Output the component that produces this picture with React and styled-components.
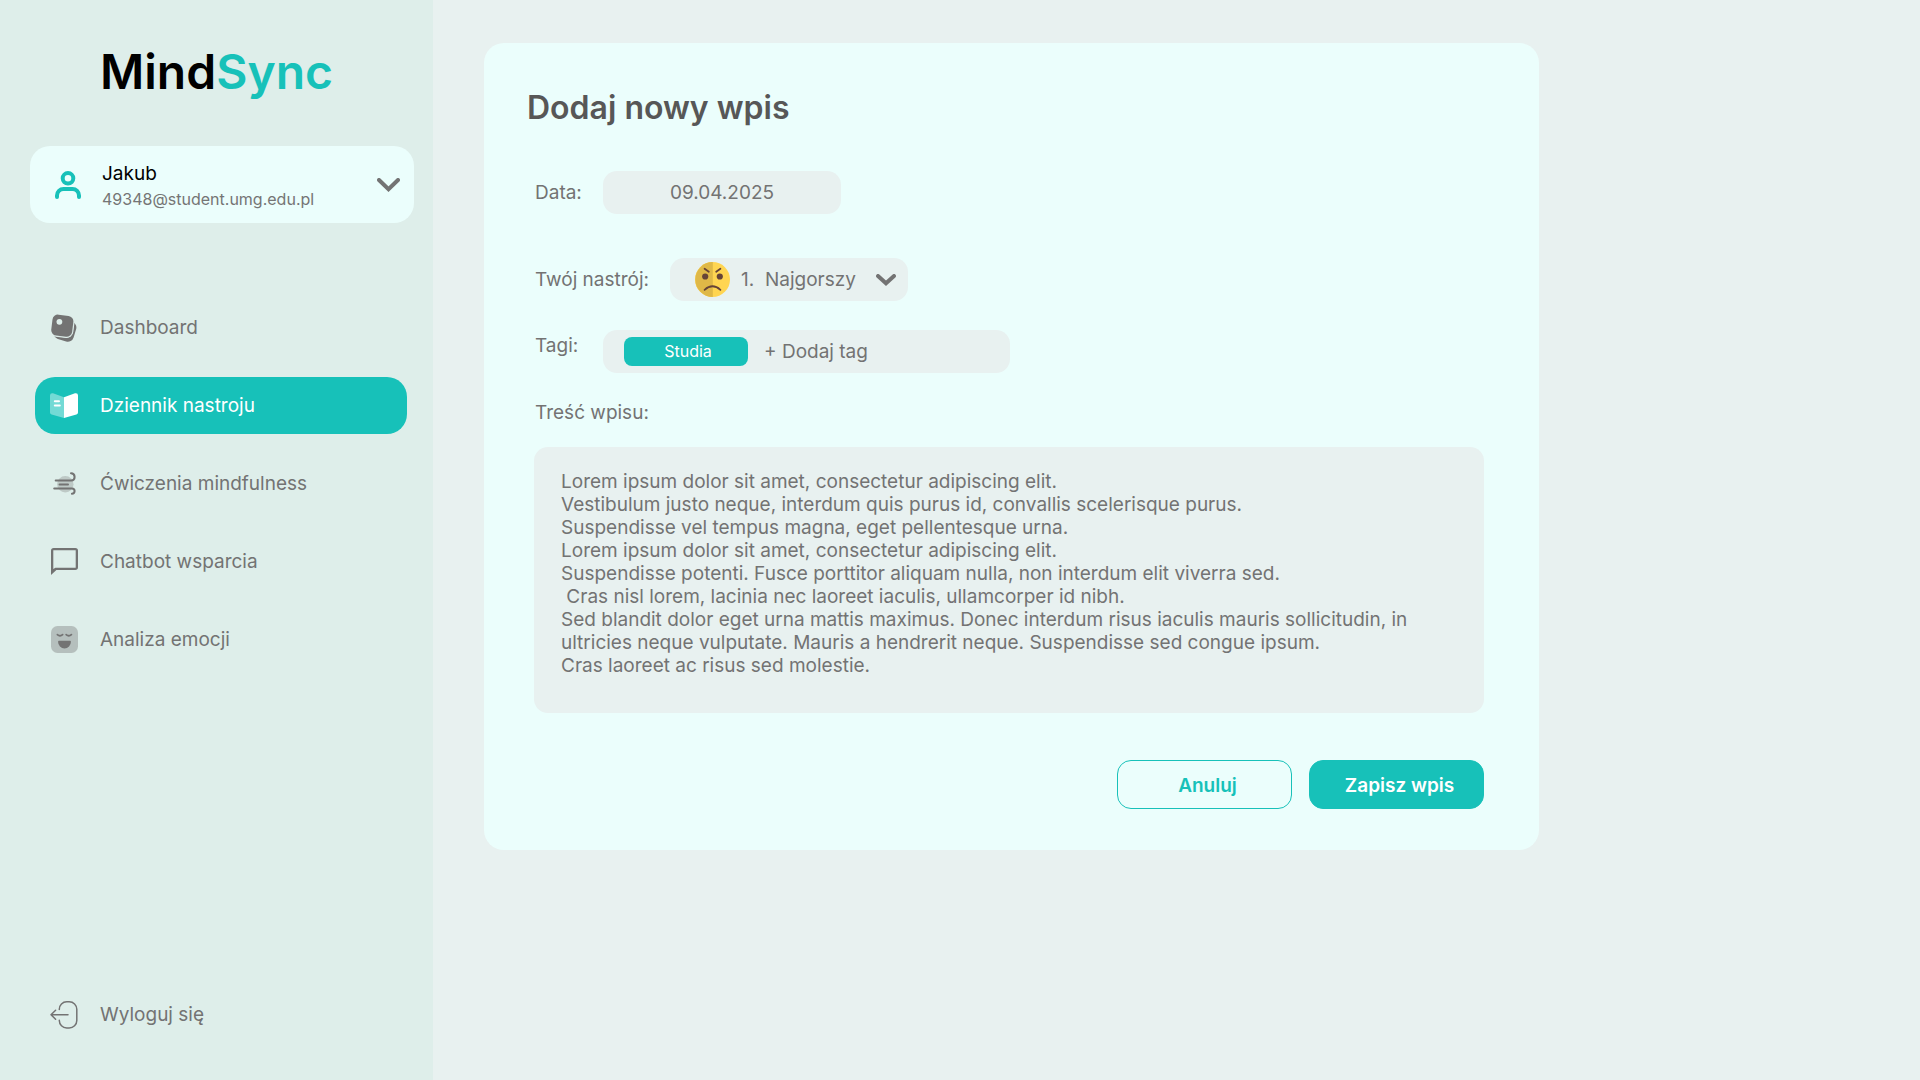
import React, { useState } from "react";
import styled, { createGlobalStyle } from "styled-components";

const teal = "#17c1b9";
const grey = "#737373";
const sidebarBg = "#deeeea";
const pageBg = "#e8f1f0";
const surface = "#ebfefc";

const GlobalStyle = createGlobalStyle`
  *, *::before, *::after { box-sizing: border-box; }
  body {
    margin: 0;
    background: ${pageBg};
    color: ${grey};
    font-family: Inter, "Liberation Sans", sans-serif;
    font-size: 19px;
    line-height: 23px;
  }
  button, input, select, textarea { font: inherit; color: inherit; }
  button { cursor: pointer; }
`;

const Layout = styled.div`
  display: flex;
  min-height: 100vh;
`;

const Sidebar = styled.aside`
  display: flex;
  flex-direction: column;
  flex: 0 0 433px;
  padding: 43px 0 37px;
  background: ${sidebarBg};
`;

const Logo = styled.div`
  color: #000;
  font-size: 48px;
  font-weight: 600;
  line-height: 58px;
  text-align: center;

  span { color: ${teal}; }
`;

const UserButton = styled.button`
  display: flex;
  align-items: center;
  gap: 21px;
  margin: 45px 19px 76px 30px;
  padding: 15px 14px 14px 25px;
  border: 0;
  border-radius: 20px;
  background: ${surface};
  text-align: left;
`;

const UserText = styled.span`
  display: flex;
  flex: 1;
  flex-direction: column;
  gap: 2px;
`;

const UserName = styled.span`
  color: #000;
  line-height: 26px;
`;

const UserMail = styled.span`
  color: #757575;
  font-size: 16px;
  line-height: 20px;
`;

const Nav = styled.nav`
  display: flex;
  flex: 1;
  flex-direction: column;
  gap: 21px;
  padding: 0 26px 0 35px;
`;

const NavLink = styled.a`
  display: flex;
  align-items: center;
  gap: 21px;
  height: 57px;
  padding: 0 14px;
  border-radius: 20px;
  background: ${({ $active }) => ($active ? teal : "transparent")};
  color: ${({ $active }) => ($active ? "#fff" : grey)};
  text-decoration: none;
  margin-top: ${({ $last }) => ($last ? "auto" : "0")};
`;

const IconSlot = styled.span`
  display: flex;
  flex: 0 0 30px;
  justify-content: center;
`;

const Main = styled.main`
  flex: 1;
  padding: 43px 51px;
`;

const Card = styled.form`
  display: flex;
  flex-direction: column;
  max-width: 1055px;
  padding: 45px 55px 41px 50px;
  border-radius: 20px;
  background: ${surface};
`;

const Title = styled.h1`
  margin: 0 -7px 44px;
  color: #575757;
  font-size: 32px;
  font-weight: 600;
  line-height: 39px;
`;

const Row = styled.div`
  display: flex;
  align-items: flex-start;
  margin-bottom: ${({ $gap }) => $gap}px;
`;

const Label = styled.label`
  min-width: 69px;
  padding: 0 21px 0 1px;
  line-height: ${({ $raised }) => ($raised ? 31 : 43)}px;
`;

const BlockLabel = styled.label`
  margin-bottom: 23px;
  padding-left: 1px;
`;

const DateInput = styled.input`
  width: 238px;
  height: 43px;
  padding: 0 14px;
  border: 0;
  border-radius: 14px;
  background: ${pageBg};
  text-align: center;
`;

const MoodField = styled.div`
  display: flex;
  align-items: center;
  width: 238px;
  height: 43px;
  padding: 0 12px 0 25px;
  border-radius: 14px;
  background: ${pageBg};
`;

const MoodSelect = styled.select`
  flex: 1;
  min-width: 0;
  height: 43px;
  padding: 0 0 0 11px;
  border: 0;
  background: transparent;
  appearance: none;
`;

const TagField = styled.div`
  display: flex;
  align-items: center;
  gap: 16px;
  width: 407px;
  height: 43px;
  padding: 0 21px;
  border-radius: 14px;
  background: ${pageBg};
`;

const Tag = styled.span`
  width: 124px;
  border-radius: 8px;
  padding: 0 0 0 4px;
  background: ${teal};
  color: #fff;
  font-size: 16px;
  line-height: 29px;
  text-align: center;
`;

const AddTag = styled.button`
  padding: 0;
  border: 0;
  background: none;
`;

const Entry = styled.textarea`
  display: block;
  width: 100%;
  height: 266px;
  margin-bottom: 47px;
  padding: 23px 40px 22px 27px;
  border: 0;
  border-radius: 14px;
  background: ${pageBg};
  line-height: 23px;
  resize: none;
`;

const Actions = styled.div`
  display: flex;
  justify-content: flex-end;
  gap: 17px;
`;

const ActionButton = styled.button`
  width: 175px;
  height: 49px;
  padding: 1px 0 0 6px;
  border: 1px solid ${teal};
  border-radius: 14px;
  background: ${({ $primary }) => ($primary ? teal : "transparent")};
  color: ${({ $primary }) => ($primary ? "#fff" : teal)};
  font-weight: 600;
`;

const UserIcon = () => (
  <svg width="26" height="28" viewBox="0 0 26 28" fill="none" stroke={teal} strokeWidth="4" strokeLinecap="round" aria-hidden="true">
    <circle cx="13" cy="7.3" r="5.3" />
    <path d="M2 26v-1.5a6.5 6.5 0 0 1 6.5-6.5h9a6.5 6.5 0 0 1 6.5 6.5V26" />
  </svg>
);

const Chevron = ({ width, height }) => (
  <svg width={width} height={height} viewBox={`0 0 ${width} ${height}`} fill="none" stroke={grey} strokeWidth="4" strokeLinecap="round" aria-hidden="true">
    <path d={`M2 2L${width / 2} ${height - 2.8}L${width - 2} 2`} />
  </svg>
);

const DashboardIcon = () => (
  <svg width="26" height="28" viewBox="0 0 26 28" fill={grey} aria-hidden="true">
    <rect x="3.7" y="6" width="20.6" height="20.6" rx="6" transform="rotate(17 14 16.3)" />
    <rect x="0.1" y="0.5" width="22.4" height="22.4" rx="6.2" transform="rotate(7 11.3 11.7)" fill={sidebarBg} stroke={sidebarBg} strokeWidth="1" />
    <rect x="0.8" y="1.2" width="21" height="21" rx="5.5" transform="rotate(7 11.3 11.7)" />
    <circle cx="8.4" cy="7.8" r="2.9" fill={sidebarBg} />
  </svg>
);

const BookIcon = () => (
  <svg width="28" height="25" viewBox="0 0 28 25" aria-hidden="true">
    <path d="M14 4.2L3 .3Q0-.3 0 2.6V19.5Q0 21 1.6 21.4L14 25z" fill="#fff" opacity=".4" />
    <path d="M14 4.2L25 .3Q28-.3 28 2.6V19.5Q28 21 26.4 21.4L14 25z" fill="#fff" />
    <path d="M4.8 8.2h4.2M4.8 12.4h5" stroke="#fff" strokeWidth="2" strokeLinecap="round" />
  </svg>
);

const WindIcon = () => (
  <svg width="23" height="23" viewBox="0 0 23 23" fill="none" stroke={grey} strokeWidth="2" strokeLinecap="round" aria-hidden="true">
    <circle cx="12.3" cy="12.2" r="8.2" fill={grey} opacity=".3" stroke="none" />
    <path d="M2.7 8.5H18.2A3.6 3.6 0 0 0 21.6 4.9A3.7 3.7 0 0 0 18 1.3" />
    <path d="M6.5 12.5H15" />
    <path d="M1.2 16.5H19A2.6 2.6 0 0 1 21.6 19.1A2.7 2.7 0 0 1 18.9 21.8" />
  </svg>
);

const ChatIcon = () => (
  <svg width="27" height="27" viewBox="0 0 27 27" aria-hidden="true">
    <path fill={grey} fillRule="evenodd" d="M2.7 0H24.3A2.7 2.7 0 0 1 27 2.7V19.3A2.7 2.7 0 0 1 24.3 22H5.4L0 27V2.7A2.7 2.7 0 0 1 2.7 0ZM2.3 2.3V21L4.4 19.7H24.7V2.3Z" />
  </svg>
);

const EmotionIcon = () => (
  <svg width="27" height="27" viewBox="0 0 27 27" aria-hidden="true">
    <rect width="27" height="27" rx="6.5" fill={grey} opacity=".38" />
    <path d="M6.4 8.6Q9 11 11.6 8.6M15.2 8.6Q17.8 11 20.4 8.6" fill="none" stroke={grey} strokeWidth="1.8" strokeLinecap="round" />
    <path d="M8 14.8H19Q20 14.8 19.9 16A6.4 6.4 0 0 1 7.1 16Q7 14.8 8 14.8Z" fill={grey} />
  </svg>
);

const LogoutIcon = () => (
  <svg width="28" height="28" viewBox="0 0 28 28" fill="none" stroke={grey} strokeWidth="1.5" strokeLinecap="round" strokeLinejoin="round" aria-hidden="true">
    <path d="M9.3 8.6V8.2A7.4 7.4 0 0 1 16.7.8H19A7.6 7.6 0 0 1 26.8 8.6V19.2A7.6 7.6 0 0 1 19 27H16.7A7.4 7.4 0 0 1 9.3 19.6V19.2" />
    <path d="M18 13.7H1M5.6 9.2L1 13.7L5.6 18.2" />
  </svg>
);

const AngryFace = () => (
  <svg width="35" height="35" viewBox="0 0 35 35" fill="none" aria-hidden="true">
    <circle cx="17.5" cy="17.5" r="17.5" fill="#ffd551" />
    <path d="M17.8 0A17.5 17.5 0 0 0 17.8 35Z" fill="#dfb847" />
    <g stroke="#664337" strokeWidth="1.8" strokeLinecap="round">
      <path d="M9.6 6.8L13.8 9.8M25.4 6.8L21.2 9.8" />
      <path d="M9.6 27.8Q17.5 20.8 25.4 27.8" />
    </g>
    <circle cx="10.2" cy="14.5" r="3.1" fill="#664337" />
    <circle cx="24.8" cy="14.5" r="3.1" fill="#664337" />
  </svg>
);

const navItems = [
  { label: "Dashboard", Icon: DashboardIcon },
  { label: "Dziennik nastroju", Icon: BookIcon, active: true },
  { label: "Ćwiczenia mindfulness", Icon: WindIcon },
  { label: "Chatbot wsparcia", Icon: ChatIcon },
  { label: "Analiza emocji", Icon: EmotionIcon },
  { label: "Wyloguj się", Icon: LogoutIcon, last: true },
];

const initialEntry = `Lorem ipsum dolor sit amet, consectetur adipiscing elit.
Vestibulum justo neque, interdum quis purus id, convallis scelerisque purus.
Suspendisse vel tempus magna, eget pellentesque urna.
Lorem ipsum dolor sit amet, consectetur adipiscing elit.
Suspendisse potenti. Fusce porttitor aliquam nulla, non interdum elit viverra sed.
 Cras nisl lorem, lacinia nec laoreet iaculis, ullamcorper id nibh.
Sed blandit dolor eget urna mattis maximus. Donec interdum risus iaculis mauris sollicitudin, in ultricies neque vulputate. Mauris a hendrerit neque. Suspendisse sed congue ipsum.
Cras laoreet ac risus sed molestie.`;

export default function App() {
  const [date, setDate] = useState("09.04.2025");
  const [entry, setEntry] = useState(initialEntry);

  return (
    <>
      <GlobalStyle />
      <Layout>
        <Sidebar>
          <Logo>Mind<span>Sync</span></Logo>
          <UserButton type="button">
            <UserIcon />
            <UserText>
              <UserName>Jakub</UserName>
              <UserMail>49348@student.umg.edu.pl</UserMail>
            </UserText>
            <Chevron width={23} height={14} />
          </UserButton>
          <Nav>
            {navItems.map(({ label, Icon, active, last }) => (
              <NavLink key={label} href="#" $active={active} $last={last} aria-current={active ? "page" : undefined}>
                <IconSlot><Icon /></IconSlot>
                {label}
              </NavLink>
            ))}
          </Nav>
        </Sidebar>
        <Main>
          <Card onSubmit={(event) => event.preventDefault()}>
            <Title>Dodaj nowy wpis</Title>
            <Row $gap={44}>
              <Label htmlFor="date">Data:</Label>
              <DateInput id="date" value={date} onChange={(event) => setDate(event.target.value)} />
            </Row>
            <Row $gap={29}>
              <Label htmlFor="mood">Twój nastrój:</Label>
              <MoodField>
                <AngryFace />
                <MoodSelect id="mood">
                  <option>1.{"\u00a0"} Najgorszy</option>
                </MoodSelect>
                <Chevron width={20} height={12} />
              </MoodField>
            </Row>
            <Row $gap={28}>
              <Label htmlFor="add-tag" $raised>Tagi:</Label>
              <TagField>
                <Tag>Studia</Tag>
                <AddTag id="add-tag" type="button">+ Dodaj tag</AddTag>
              </TagField>
            </Row>
            <BlockLabel htmlFor="entry">Treść wpisu:</BlockLabel>
            <Entry id="entry" spellCheck={false} value={entry} onChange={(event) => setEntry(event.target.value)} />
            <Actions>
              <ActionButton type="button">Anuluj</ActionButton>
              <ActionButton type="submit" $primary>Zapisz wpis</ActionButton>
            </Actions>
          </Card>
        </Main>
      </Layout>
    </>
  );
}
